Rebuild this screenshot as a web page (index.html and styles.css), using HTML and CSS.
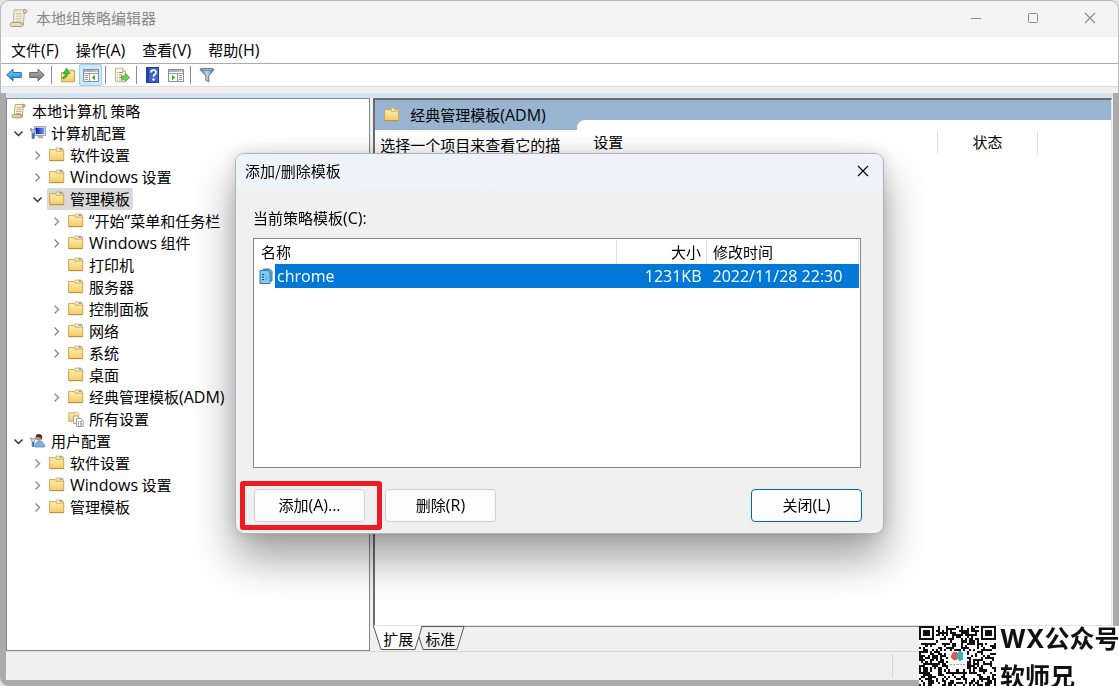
FILE: index.html
```html
<!DOCTYPE html>
<html lang="zh-CN">
<head>
<meta charset="UTF-8">
<meta name="viewport" content="width=device-width, initial-scale=1.0">
<title>本地组策略编辑器</title>
<link rel="stylesheet" href="styles.css">
</head>
<body>

<!-- shared icons -->
<svg class="sprite" aria-hidden="true">
    <defs>
        <linearGradient id="gFolder" x1="0" y1="0" x2="0" y2="1"><stop offset="0" stop-color="#ffeeb0"/><stop offset="1" stop-color="#f2cb68"/></linearGradient>
        <linearGradient id="gBlue" x1="0" y1="0" x2="0" y2="1"><stop offset="0" stop-color="#7fd3fa"/><stop offset="1" stop-color="#1485d0"/></linearGradient>
        <linearGradient id="gGray" x1="0" y1="0" x2="0" y2="1"><stop offset="0" stop-color="#b5b5b5"/><stop offset="1" stop-color="#747474"/></linearGradient>
        <linearGradient id="gScreen" x1="0" y1="0" x2="1" y2="0"><stop offset="0" stop-color="#0a18b0"/><stop offset="1" stop-color="#6f9cf5"/></linearGradient>
        <linearGradient id="gFunnel" x1="0" y1="0" x2="1" y2="0"><stop offset="0" stop-color="#557590"/><stop offset=".5" stop-color="#c4d8e6"/><stop offset="1" stop-color="#456680"/></linearGradient>
    </defs>
    <symbol id="folder" viewBox="0.8 0.8 15 15">
        <path d="M7.5 3.5V1.8h5.2l1.8 1.4v3h-7z" fill="#fff4cc" stroke="#cfa452" stroke-width=".8"/>
        <path d="M10.5 2.8h3" stroke="#4c92c8"/>
        <path d="M1.4 3.2h5.2l1.2 1.5h6.8v8.8H1.4z" fill="url(#gFolder)" stroke="#d1a349" stroke-width=".9"/>
        <path d="M1.5 13.6h13" stroke="#b78a37" stroke-width=".8"/>
    </symbol>
    <symbol id="scroll" viewBox="0 0 16 16">
        <path d="M4 1.5h8.5l-1.2 12H3.2z" fill="#f5ecd0" stroke="#ad9c70" stroke-width=".8"/>
        <path d="M5.5 4.5h5M5.4 6.5h5M5.2 8.5h5M5 10.5h5" stroke="#b6ab8c" stroke-width=".8"/>
        <path d="M12 1.2c3-.5 3.2 3 .8 2.8h-1.2zM2.4 11.6h7.4c-.7 2 1.2 2.2 1.5.2v2c-.6 1-1.5 1-2.3 1H2.3c-1.9 0-1.8-3.2.1-3.2z" fill="#e3d5a5" stroke="#8f8155" stroke-width=".8"/>
    </symbol>
    <symbol id="computer" viewBox="0 0 16 16">
        <path d="M4.5 1.5h11v9h-11z" fill="#dce3ed" stroke="#8894a6" stroke-width=".8"/>
        <path d="M5.8 2.8h8.4v6.2H5.8z" fill="url(#gScreen)"/>
        <path d="M8.5 10.5h4l.8 2.7H7.7z" fill="#a6adb5"/>
        <path d="M.8 3v3l1.3 1.2v6.2h2.2V7.2L5.5 6V3L4.3 4.8H2.1z" fill="#b5ccdf" stroke="#4b718f" stroke-width=".7"/>
        <path d="M3.2 8.5v5" stroke="#1f67b5" stroke-width="1.6"/>
    </symbol>
    <symbol id="user" viewBox="0 0 16 16">
        <path d="M5 14c0-4 1.5-6 4.5-6s5 2.5 5 6z" fill="#7fb2df" stroke="#477eaf" stroke-width=".7"/>
        <circle cx="9" cy="4.5" r="3.2" fill="#bd926c"/>
        <path d="M5.6 4.3C5.5 0 12 0 12.3 4.5l-1 2c-.4-2-2-3-5.7-2.2z" fill="#41382f"/>
        <path d="M.8 4.5v2.3L2.1 8v5.6h2V8l1.2-1.2V4.5L4 6H2.1z" fill="#d8e1e8" stroke="#64798c" stroke-width=".7"/>
        <path d="M3.1 9v4.5" stroke="#1f67b5" stroke-width="1.5"/>
    </symbol>
    <symbol id="allset" viewBox="0 0 16 16">
        <path d="M.8 1.8h4.5l1 1.2h4.2v7.5H.8z" fill="url(#gFolder)" stroke="#d1a349" stroke-width=".8"/>
        <path d="M6 2.5V1.2h4l1 1V4" fill="#fff4cc" stroke="#cfa452" stroke-width=".7"/>
        <path d="M5.5 5h4L11 6.5v6H5.5z" fill="#fff" stroke="#929292" stroke-width=".8"/>
        <path d="M8.5 7.5h4.3l2.4 2.4v5.6H8.5z" fill="#fff" stroke="#808080" stroke-width=".8"/>
        <path d="M10 10.5h1M12 10.5h2M10 12.3h1M12 12.3h2M10 14h1M12 14h2" stroke="#666" stroke-width=".8"/>
    </symbol>
    <symbol id="right" viewBox="0 0 11 11"><path d="M3.5 1.5l4 4-4 4" fill="none" stroke="#8c8c8c" stroke-width="1.4"/></symbol>
    <symbol id="down" viewBox="0 0 11 11"><path d="M1.5 3.5l4 4 4-4" fill="none" stroke="#333" stroke-width="1.5"/></symbol>
    <symbol id="close" viewBox="0 0 12 12"><path d="M1 1l10 10M11 1L1 11" fill="none" stroke="currentColor" stroke-width="1.1"/></symbol>
</svg>

<div class="window">
    <header class="titlebar">
        <svg class="app-icon"><use href="#scroll"/></svg>
        <h1>本地组策略编辑器</h1>
        <div class="controls">
            <button aria-label="最小化"><svg viewBox="0 0 12 12"><path d="M1 6.5h10" stroke="currentColor"/></svg></button>
            <button aria-label="最大化"><svg viewBox="0 0 12 12"><rect x="1.5" y="1.5" width="9" height="9" rx="1" fill="none" stroke="currentColor"/></svg></button>
            <button aria-label="关闭"><svg><use href="#close"/></svg></button>
        </div>
    </header>

    <nav class="menubar">
        <button>文件<span class="latin">(F)</span></button>
        <button>操作<span class="latin">(A)</span></button>
        <button>查看<span class="latin">(V)</span></button>
        <button>帮助<span class="latin">(H)</span></button>
    </nav>

    <div class="toolbar">
        <button aria-label="后退"><svg viewBox="0 0 16 16"><path d="M.7 8L7 2.2v3.3h8.3v5H7v3.3z" fill="url(#gBlue)" stroke="#1769a5" stroke-width=".9"/></svg></button>
        <button aria-label="前进"><svg viewBox="0 0 16 16"><path d="M15.3 8L9 2.2v3.3H.7v5H9v3.3z" fill="url(#gGray)" stroke="#606060" stroke-width=".9"/></svg></button>
        <span class="sep"></span>
        <button aria-label="向上"><svg viewBox="0 0 16 16"><path d="M1.5 5.5h5l1-1.7h7v11h-13z" fill="url(#gFolder)" stroke="#c59a43" stroke-width=".9"/><path d="M9.5 3h4.3v2" fill="none" stroke="#d5b060"/><path d="M3 11.5c3.5-.5 4.8-2.5 4.8-5H10L6.7 1.2 3.2 6.5h2.2c0 2-1 3.500-2.900 3.900z" fill="#48c531" stroke="#278d1c" stroke-width=".7"/></svg></button>
        <button class="pressed" aria-label="显示/隐藏控制台树"><svg viewBox="0 0 16 16"><path d="M.5 2.5h15v12H.5z" fill="#f7f7f5" stroke="#888f96"/><path d="M1 3h14v2H1z" fill="#a9b2ba"/><path d="M11 4h1M13 4h1" stroke="#fff"/><path d="M1 6.5h14M6.5 7v7" stroke="#999fa5"/><path d="M2 8.5h3M2 10.5h3M2 12.5h3" stroke="#8d969f"/><path d="M8 7.5h6v6H8z" fill="#fff"/><path d="M12 8v5.2L8.8 10.6z" fill="#35ac22"/></svg></button>
        <span class="sep"></span>
        <button aria-label="导出列表"><svg viewBox="0 0 16 16"><path d="M1.5 1.2h7l3 3v10.6h-10z" fill="#fffbea" stroke="#b1a887" stroke-width=".9"/><path d="M8.5 1.5v3h3" fill="#eee5c8" stroke="#b1a887" stroke-width=".8"/><path d="M3 5.5h1M5 5.5h4M3 8h1M5 8h3M3 10.5h1M5 10.5h3M3 13h1M5 13h5" stroke="#7b7b7b" stroke-width=".8"/><path d="M7.5 9h3.8V6.5l4.300 4-4.300 4V12H7.500z" fill="#6ed84c" stroke="#39a522" stroke-width=".8"/></svg></button>
        <span class="sep"></span>
        <button aria-label="帮助"><svg viewBox="0 0 16 16"><rect x="1.5" y=".5" width="12" height="15" fill="#3c62cb" stroke="#253e91"/><path d="M2 1h2v14H2z" fill="#2545a5"/><path d="M6 5.5c0-3.3 5-3 5-.3 0 2.200-2.500 2-2.500 4.600" fill="none" stroke="#fff" stroke-width="1.8"/><circle cx="8.500" cy="12.500" r="1.200" fill="#fff"/></svg></button>
        <button aria-label="显示/隐藏操作窗格"><svg viewBox="0 0 16 16"><path d="M.5 2.5h15v12H.5z" fill="#f7f7f5" stroke="#888f96"/><path d="M1 3h14v2H1z" fill="#a9b2ba"/><path d="M11 4h1M13 4h1" stroke="#fff"/><path d="M1 6.5h14M9.5 7v7" stroke="#999fa5"/><path d="M11 8.5h3M11 10.5h3M11 12.5h3" stroke="#8d969f"/><path d="M4 8v5.2l3.200-2.600z" fill="#35ac22"/></svg></button>
        <span class="sep"></span>
        <button aria-label="筛选"><svg viewBox="0 0 16 16"><path d="M1 2.5C1 1 15 1 15 2.5L9.800 8.800v6l-3-1.500V8.800z" fill="url(#gFunnel)" stroke="#405e75" stroke-width=".8"/><ellipse cx="8" cy="2.5" rx="6.5" ry="1" fill="#9fb9cb" stroke="#4c6a82" stroke-width=".5"/></svg></button>
    </div>

    <div class="frame">
        <main class="panes">
            <div class="tree">
                <div class="row"><span class="node"><svg><use href="#scroll"/></svg>本地计算机 策略</span></div>
                <ul>
                    <li>
                        <div class="row"><button class="twist" aria-label="折叠"><svg><use href="#down"/></svg></button><span class="node"><svg><use href="#computer"/></svg>计算机配置</span></div>
                        <ul>
                            <li><div class="row"><button class="twist" aria-label="展开"><svg><use href="#right"/></svg></button><span class="node"><svg><use href="#folder"/></svg>软件设置</span></div></li>
                            <li><div class="row"><button class="twist" aria-label="展开"><svg><use href="#right"/></svg></button><span class="node"><svg><use href="#folder"/></svg><span class="latin">Windows</span>&nbsp;设置</span></div></li>
                            <li>
                                <div class="row"><button class="twist" aria-label="折叠"><svg><use href="#down"/></svg></button><span class="node selected"><svg><use href="#folder"/></svg>管理模板</span></div>
                                <ul>
                                    <li><div class="row"><button class="twist" aria-label="展开"><svg><use href="#right"/></svg></button><span class="node"><svg><use href="#folder"/></svg><span class="latin">“</span>开始<span class="latin">”</span>菜单和任务栏</span></div></li>
                                    <li><div class="row"><button class="twist" aria-label="展开"><svg><use href="#right"/></svg></button><span class="node"><svg><use href="#folder"/></svg><span class="latin">Windows</span>&nbsp;组件</span></div></li>
                                    <li><div class="row"><span class="twist"></span><span class="node"><svg><use href="#folder"/></svg>打印机</span></div></li>
                                    <li><div class="row"><span class="twist"></span><span class="node"><svg><use href="#folder"/></svg>服务器</span></div></li>
                                    <li><div class="row"><button class="twist" aria-label="展开"><svg><use href="#right"/></svg></button><span class="node"><svg><use href="#folder"/></svg>控制面板</span></div></li>
                                    <li><div class="row"><button class="twist" aria-label="展开"><svg><use href="#right"/></svg></button><span class="node"><svg><use href="#folder"/></svg>网络</span></div></li>
                                    <li><div class="row"><button class="twist" aria-label="展开"><svg><use href="#right"/></svg></button><span class="node"><svg><use href="#folder"/></svg>系统</span></div></li>
                                    <li><div class="row"><span class="twist"></span><span class="node"><svg><use href="#folder"/></svg>桌面</span></div></li>
                                    <li><div class="row"><button class="twist" aria-label="展开"><svg><use href="#right"/></svg></button><span class="node"><svg><use href="#folder"/></svg>经典管理模板<span class="latin">(ADM)</span></span></div></li>
                                    <li><div class="row"><span class="twist"></span><span class="node"><svg><use href="#allset"/></svg>所有设置</span></div></li>
                                </ul>
                            </li>
                        </ul>
                    </li>
                    <li>
                        <div class="row"><button class="twist" aria-label="折叠"><svg><use href="#down"/></svg></button><span class="node"><svg><use href="#user"/></svg>用户配置</span></div>
                        <ul>
                            <li><div class="row"><button class="twist" aria-label="展开"><svg><use href="#right"/></svg></button><span class="node"><svg><use href="#folder"/></svg>软件设置</span></div></li>
                            <li><div class="row"><button class="twist" aria-label="展开"><svg><use href="#right"/></svg></button><span class="node"><svg><use href="#folder"/></svg><span class="latin">Windows</span>&nbsp;设置</span></div></li>
                            <li><div class="row"><button class="twist" aria-label="展开"><svg><use href="#right"/></svg></button><span class="node"><svg><use href="#folder"/></svg>管理模板</span></div></li>
                        </ul>
                    </li>
                </ul>
            </div>

            <section class="detail">
                <div class="view">
                    <div class="info">
                        <h2><svg><use href="#folder"/></svg>经典管理模板<span class="latin">(ADM)</span></h2>
                        <p>选择一个项目来查看它的描</p>
                    </div>
                    <div class="settings">
                        <table>
                            <thead><tr><th class="col-name">设置</th><th class="col-state">状态</th><th></th></tr></thead>
                        </table>
                    </div>
                </div>
                <div class="tabs">
                    <svg class="tab-shape" viewBox="0 0 92 25">
                        <path d="M0 0h48L43 23.5H8z" fill="#fff"/>
                        <path d="M.5 0L8 23.5h34L49 .5h42L84 23.5H50L46 11" fill="none" stroke="#555"/>
                    </svg>
                    <button>扩展</button>
                    <button>标准</button>
                </div>
            </section>
        </main>
        <footer class="statusbar"><span></span></footer>
    </div>
</div>

<div class="overlay">
    <div class="dialog" role="dialog" aria-labelledby="dialogTitle">
        <header class="dialog-title">
            <h2 id="dialogTitle">添加/删除模板</h2>
            <button aria-label="关闭"><svg><use href="#close"/></svg></button>
        </header>
        <div class="dialog-body">
            <p id="listLabel">当前策略模板<span class="latin">(C):</span></p>
            <div class="list">
                <table aria-labelledby="listLabel">
                    <colgroup>
                        <col class="w-icon">
                        <col>
                        <col class="w-size">
                        <col class="w-date">
                    </colgroup>
                    <thead>
                        <tr><th class="name" colspan="2">名称</th><th class="size">大小</th><th class="date">修改时间</th></tr>
                    </thead>
                    <tbody>
                        <tr>
                            <td class="icon"><svg viewBox="0 0 14 16"><path d="M4.5 1h6L13 3.5V13H4.5z" fill="#65abd8" stroke="#347baf"/><path d="M1 2.5h7.5L11 5v10.5H1z" fill="#8bc8ee" stroke="#347baf"/><path d="M3 6.5h2M3 9h2M3 11.5h2" stroke="#14506f"/><path d="M5.5 6.5h2M6 9h3M6 11.5h2" stroke="#08d5e8"/></svg></td>
                            <td>chrome</td>
                            <td class="size">1231KB</td>
                            <td class="date">2022/11/28 22:30</td>
                        </tr>
                    </tbody>
                </table>
            </div>
            <div class="actions">
                <span class="marked"><button>添加<span class="latin">(A)...</span></button></span>
                <button>删除<span class="latin">(R)</span></button>
                <button class="default">关闭<span class="latin">(L)</span></button>
            </div>
        </div>
    </div>
</div>

<aside class="watermark">
    <svg id="qr" viewBox="0 0 37 29" shape-rendering="crispEdges"></svg>
    <div class="account">
        <p><span class="wx">WX</span>公众号</p>
        <p>软师兄</p>
    </div>
</aside>

<script src="script.js"></script>
</body>
</html>
```

FILE: styles.css
```css
* {
    box-sizing: border-box;
}

body {
    margin: 0;
    background: #e4e4e4;
    color: #000;
    font: 15px/22px "Noto Sans CJK SC", sans-serif;
    overflow: hidden;
}

h1, h2, p, ul {
    margin: 0;
    padding: 0;
    font-size: 15px;
    font-weight: 400;
}

ul {
    list-style: none;
}

button {
    padding: 0;
    border: none;
    background: none;
    color: inherit;
    font: inherit;
}

svg {
    display: block;
    flex: none;
    width: 16px;
    height: 16px;
}

table {
    border-collapse: collapse;
    table-layout: fixed;
    width: 100%;
}

th, td {
    padding: 0;
    font-weight: 400;
    text-align: left;
}

.sprite {
    position: absolute;
    width: 0;
    height: 0;
}

.latin {
    font-family: "Open Sans", sans-serif;
    font-size: 16px;
}

/* main window */
.window {
    display: flex;
    flex-direction: column;
    height: 100vh;
    border-radius: 9px;
    background: #f0f0f0;
    box-shadow: inset 0 0 0 1px #b9b9b9;
    overflow: hidden;
}

.titlebar {
    display: flex;
    align-items: center;
    height: 37px;
    padding: 0 0 2px 8px;
    border: 1px solid #b9b9b9;
    border-bottom: none;
    border-radius: 9px 9px 0 0;
    background: #f3f3f3;
    color: #888;
}

.app-icon {
    width: 20px;
    height: 20px;
    margin-right: 7px;
    opacity: .75;
}

.controls {
    display: flex;
    margin-left: auto;
}

.controls button {
    display: flex;
    align-items: center;
    justify-content: center;
    width: 57px;
    height: 34px;
}

.controls svg {
    width: 12px;
    height: 12px;
}

.menubar {
    display: flex;
    gap: 17px;
    height: 27px;
    margin: 0 1px;
    padding: 0 10px;
    border-bottom: 1px solid #acacac;
    background: #fff;
}

.toolbar {
    display: flex;
    align-items: center;
    height: 23px;
    margin: 0 1px;
    padding-left: 1px;
    border-bottom: 1px solid #dadada;
    background: #fff;
}

.toolbar button {
    display: flex;
    align-items: center;
    justify-content: center;
    width: 23px;
    height: 22px;
}

.toolbar .pressed {
    border: 1px solid #99d1ff;
    border-radius: 2px;
    background: #cce8ff;
}

.sep {
    width: 1px;
    height: 18px;
    margin: 0 4px 0 3px;
    background: #8d8d8d;
}

.frame {
    display: flex;
    flex: 1;
    flex-direction: column;
    min-height: 0;
    margin-top: 6px;
    border: solid #ababab;
    border-width: 0 6px 6px;
    background: #f0f0f0;
}

.panes {
    display: flex;
    flex: 1;
    gap: 3px;
    min-height: 0;
    border-top: 5px solid #d6e3f0;
}

/* console tree */
.tree {
    width: 32.9%;
    min-width: 240px;
    padding: 1px 2px;
    border: 1px solid #828790;
    background: #fff;
    white-space: nowrap;
    overflow: hidden;
}

.tree ul ul {
    padding-left: 19px;
}

.row {
    display: flex;
    height: 22px;
}

.twist {
    display: flex;
    align-items: center;
    justify-content: center;
    width: 19px;
}

.twist svg {
    width: 11px;
    height: 11px;
}

.node {
    display: flex;
    align-items: center;
    padding: 0 3px 0 2px;
    border-radius: 2px;
}

.node svg {
    margin-right: 5px;
}

.selected {
    background: #d9d9d9;
}

/* detail pane */
.detail {
    display: flex;
    flex: 1;
    flex-direction: column;
    min-width: 0;
    padding-right: 1px;
}

.view {
    display: flex;
    flex: 1;
    border: 2px solid #6d6d6d;
    border-right: 1px solid #e3e3e3;
    border-bottom: 1px solid #e3e3e3;
    background: #99b4d1;
}

.info {
    display: flex;
    flex-direction: column;
    width: 202px;
    white-space: nowrap;
}

.info h2 {
    display: flex;
    align-items: center;
    height: 30px;
    padding-left: 9px;
}

.info h2 svg {
    margin-right: 10px;
}

.info p {
    flex: 1;
    padding: 4px 5px;
    background: #fff;
}

.settings {
    flex: 1;
    margin-top: 20px;
    padding-top: 10px;
    border-radius: 8px 0 0 0;
    background: #fff;
}

.settings th {
    height: 24px;
    border-right: 1px solid #e2e2e2;
}

.settings th:last-child {
    border-right: none;
}

.settings .col-name {
    width: 67.5%;
    padding-left: 16px;
}

.settings .col-state {
    width: 100px;
    text-align: center;
}

.tabs {
    position: relative;
    display: flex;
    gap: 12px;
    height: 25px;
    padding-left: 10px;
    border-top: 1px solid #8a8a8a;
}

.tabs button {
    position: relative;
}

.tab-shape {
    position: absolute;
    top: -1px;
    left: 0;
    width: 92px;
    height: 25px;
}

.statusbar {
    display: flex;
    justify-content: flex-end;
    height: 29px;
    padding: 2px 0;
    border-top: 1px solid #d7d7d7;
}

.statusbar span {
    width: 20%;
    border-left: 1px solid #d7d7d7;
}

/* dialog */
.overlay {
    position: fixed;
    inset: 0;
    display: flex;
    align-items: center;
    justify-content: center;
}

.dialog {
    width: 58%;
    min-width: 520px;
    border: 1px solid #b0b3b8;
    border-radius: 9px;
    background: #f0f0f0;
    box-shadow: 0 24px 44px rgba(0, 0, 0, .38), 0 0 16px rgba(0, 0, 0, .14);
    overflow: hidden;
}

.dialog-title {
    display: flex;
    align-items: center;
    justify-content: space-between;
    height: 36px;
    padding: 0 14px 2px 9px;
    background: linear-gradient(90deg, #eef3f8, #eff2fb 50%);
}

.dialog-title svg {
    width: 12px;
    height: 12px;
}

.dialog-body {
    padding: 17px 22px 11px 17px;
}

.list {
    height: 230px;
    margin: 9px 0 21px;
    padding: 1px;
    border: 1px solid #828790;
    background: #fff;
}

.w-icon {
    width: 20px;
}

.w-size {
    width: 90px;
}

.w-date {
    width: 152px;
}

.list th {
    height: 24px;
    border-right: 1px solid #e2e2e2;
}

.list td {
    height: 24px;
    padding-left: 2px;
    background: #0078d7;
    color: #fff;
    font-family: "Open Sans", sans-serif;
    font-size: 16px;
}

.list .name {
    padding-left: 6px;
}

.list .size {
    padding-right: 5px;
    text-align: right;
}

.list .date {
    padding-left: 6px;
}

.list .icon {
    padding-left: 4px;
    background: #fff;
}

.list .icon svg {
    width: 14px;
}

.actions {
    display: flex;
    gap: 20px;
    margin: 0 -1px 0 1px;
}

.actions button {
    width: 111px;
    height: 33px;
    border: 1px solid #d0d0d0;
    border-radius: 4px;
    background: #fdfdfd;
}

.actions .default {
    margin-left: auto;
    border-color: #0067c0;
}

.marked {
    position: relative;
}

/* red highlight around the add button */
.marked::after {
    content: "";
    position: absolute;
    inset: -8px -17px -8px -14px;
    border: 5px solid #ed1c24;
    border-radius: 3px;
}

/* watermark */
.watermark {
    position: fixed;
    right: 0;
    bottom: 0;
    display: flex;
    gap: 4px;
    width: 200px;
    height: 60px;
    background: #fff;
}

#qr {
    width: 77px;
    height: 60px;
}

.account {
    display: flex;
    flex-direction: column;
    justify-content: space-between;
}

.account p {
    color: #111;
    font-size: 25px;
    font-weight: 700;
    line-height: 22px;
    white-space: nowrap;
}

.wx {
    font-family: Inter, sans-serif;
}
```

FILE: script.js
```js
const qr = document.getElementById('qr');
const size = 37;
let seed = 20221;
let path = '';

function random() {
    seed = (seed * 16807) % 2147483647;
    return seed / 2147483647;
}

// finder square in a corner, with its quiet zone
function finder(x, y) {
    if (x > 18) x = size - 1 - x;
    if (y > 18) y = size - 1 - y;
    if (x > 7 || y > 7) return null;
    const d = Math.max(Math.abs(x - 3), Math.abs(y - 3));
    return d === 3 || d < 2;
}

for (let y = 0; y < size; y++) {
    for (let x = 0; x < size; x++) {
        const corner = (x > 18 && y > 18) ? null : finder(x, y);
        const logo = x > 13 && x < 23 && y > 11 && y < 21;
        const dark = corner === null ? random() > 0.48 && !logo : corner;
        // the lower rows run off the bottom of the screen
        if (dark && y < 29) path += `M${x} ${y}h1v1h-1z`;
    }
}

qr.innerHTML = `<path d="${path}" fill="#111"/>
    <ellipse cx="17.3" cy="14.5" rx="1.8" ry="2.2" fill="#e8574a"/>
    <ellipse cx="19.8" cy="14.5" rx="1.6" ry="2.3" fill="#36b3bd"/>
    <path d="M15 18.5h7" stroke="#aaa" stroke-width=".6" stroke-dasharray="1 .5"/>`;
```
